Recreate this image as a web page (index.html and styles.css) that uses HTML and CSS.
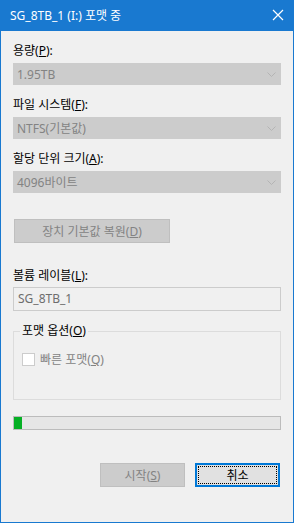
FILE: index.html
```html
<!DOCTYPE html>
<html lang="ko">
<head>
  <meta charset="UTF-8">
  <title>SG_8TB_1 (I:) 포맷 중</title>
  <link rel="stylesheet" href="styles.css">
</head>
<body>
  <div class="window">
    <header class="titlebar">
      <span class="title">SG_8TB_1 (I:) 포맷 중</span>
      <svg class="close" width="12" height="12" viewBox="0 0 12 12">
        <path d="M1 1 L11 11 M11 1 L1 11" stroke="#fff" stroke-width="1.2" fill="none"/>
      </svg>
    </header>
    <main class="content">
      <label class="label">용량(<u>P</u>):</label>
      <div class="combo">
        <span>1.95TB</span>
        <svg class="chev" width="9" height="5" viewBox="0 0 9 5"><path d="M0.5 0.5 L4.5 4.5 L8.5 0.5" stroke="#b4b4b4" fill="none"/></svg>
      </div>

      <label class="label gap">파일 시스템(<u>F</u>):</label>
      <div class="combo">
        <span>NTFS(기본값)</span>
        <svg class="chev" width="9" height="5" viewBox="0 0 9 5"><path d="M0.5 0.5 L4.5 4.5 L8.5 0.5" stroke="#b4b4b4" fill="none"/></svg>
      </div>

      <label class="label gap">할당 단위 크기(<u>A</u>):</label>
      <div class="combo">
        <span>4096바이트</span>
        <svg class="chev" width="9" height="5" viewBox="0 0 9 5"><path d="M0.5 0.5 L4.5 4.5 L8.5 0.5" stroke="#b4b4b4" fill="none"/></svg>
      </div>

      <button class="btn disabled restore">장치 기본값 복원(<u>D</u>)</button>

      <label class="label volume">볼륨 레이블(<u>L</u>):</label>
      <div class="textbox">SG_8TB_1</div>

      <fieldset class="group">
        <legend>포맷 옵션(<u>O</u>)</legend>
        <div class="check-row">
          <span class="checkbox"></span>
          <span>빠른 포맷(<u>Q</u>)</span>
        </div>
      </fieldset>

      <div class="progress"><div class="fill" style="width: 8px"></div></div>

      <div class="actions">
        <button class="btn disabled">시작(<u>S</u>)</button>
        <button class="btn focused"><span class="focus-ring">취소</span></button>
      </div>
    </main>
  </div>
</body>
</html>
```

FILE: styles.css
```css
*, *::before, *::after { box-sizing: border-box; }
html, body { margin: 0; padding: 0; }
body {
  width: 294px;
  height: 523px;
  font-family: 'Noto Sans', 'Noto Sans CJK KR', sans-serif;
  font-size: 12px;
  color: #000;
  background: #f0f0f0;
}
u { text-decoration: underline; text-underline-offset: 1px; }

.window {
  height: 523px;
  border: 1px solid #1979d0;
  border-top: none;
  display: flex;
  flex-direction: column;
  background: #f0f0f0;
}
.titlebar {
  height: 31px;
  margin: 0 -1px;
  background: #1979d0;
  color: #fff;
  display: flex;
  align-items: center;
  justify-content: space-between;
  padding: 0 10px 1px 10px;
  font-size: 12px;
}

.content {
  padding: 12px 12px 0 12px;
  display: flex;
  flex-direction: column;
}
.label { display: block; height: 16px; line-height: 16px; margin-bottom: 4px; }
.label.gap { margin-top: 12px; margin-bottom: 4px; }
.label.volume { margin-top: 25px; margin-bottom: 3px; }

.combo {
  height: 22px;
  background: #cccccc;
  color: #838383;
  display: flex;
  align-items: center;
  justify-content: space-between;
  padding: 0 5px 0 4px;
}

.btn {
  height: 24px;
  font-family: inherit;
  font-size: 12px;
  padding: 0;
  cursor: default;
}
.btn.disabled {
  background: #cccccc;
  border: 1px solid #bfbfbf;
  color: #838383;
}
.restore { width: 156px; margin: 26px 0 0 1px; }

.textbox {
  height: 24px;
  border: 1px solid #cccccc;
  background: #f0f0f0;
  color: #6d6d6d;
  line-height: 22px;
  padding: 0 4px;
}

.group {
  margin: 12px 0 0 0;
  padding: 0 8px 32px 8px;
  border: 1px solid #dcdcdc;
}
.group legend { padding: 0 2px; margin-left: -2px; line-height: 16px; height: 16px; }
.check-row { display: flex; align-items: center; gap: 5px; margin-top: 12px; color: #838383; height: 16px; }
.checkbox {
  width: 13px;
  height: 13px;
  border: 1px solid #cccccc;
  background: #fff;
}

.progress {
  margin-top: 16px;
  height: 14px;
  border: 1px solid #bcbcbc;
  background: #e6e6e6;
}
.progress .fill { height: 100%; background: #06b025; }

.actions {
  margin-top: 33px;
  display: flex;
  justify-content: flex-end;
  gap: 10px;
  padding-right: 1px;
}
.actions .btn { width: 85px; }
.btn.focused {
  background: #e1e1e1;
  border: 2px solid #0078d7;
  padding: 1px;
}
.focus-ring {
  display: flex;
  align-items: center;
  justify-content: center;
  height: 100%;
  border: 1px dotted #000;
  color: #000;
}
```
